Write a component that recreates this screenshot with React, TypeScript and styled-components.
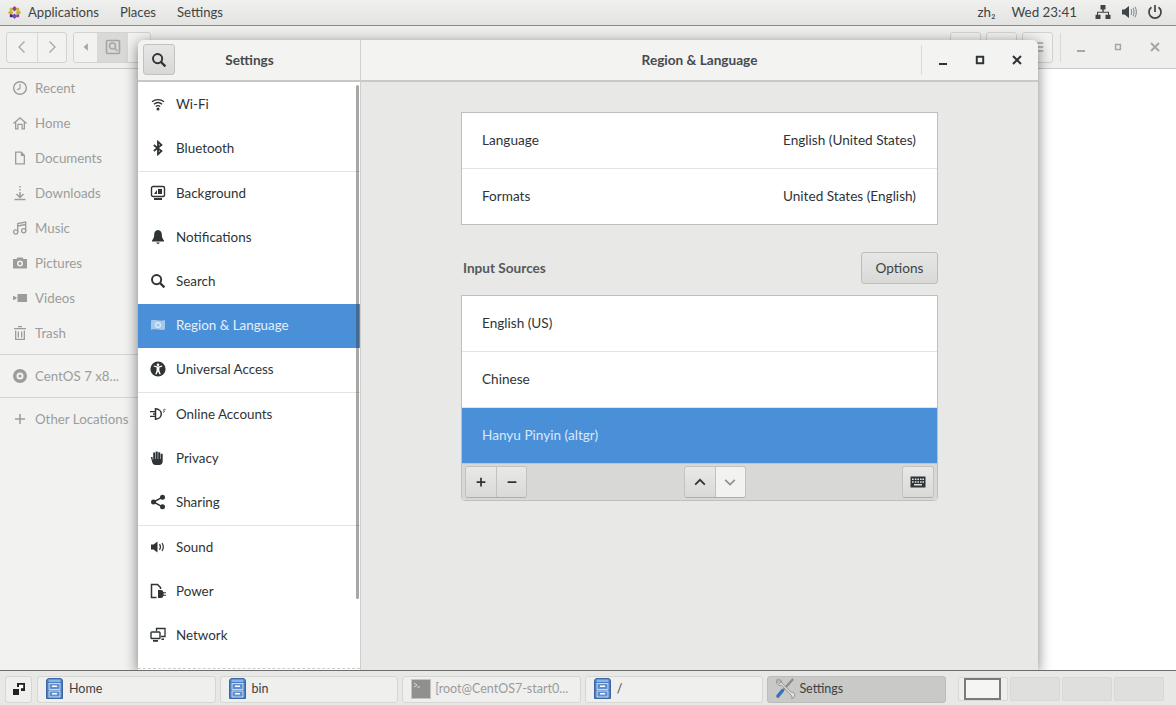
import styled, { createGlobalStyle } from "styled-components";
import { ReactNode } from "react";

const GlobalStyle = createGlobalStyle`
	html, body {
		margin: 0;
		padding: 0;
		width: 1176px;
		height: 705px;
		overflow: hidden;
		background: #e8e8e7;
		font-family: Lato, "Open Sans", sans-serif;
		font-size: 13.6px;
	}
	* { box-sizing: border-box; }
`;

const icons: Record<string, ReactNode> = {
	wifi: (
		<>
			<path d="M2 5.800C5.500 2.900 10.500 2.900 14 5.800M3.900 8.200c2.400-2 5.800-2 8.200 0M5.800 10.500c1.300-1 3.100-1 4.400 0" fill="none" stroke="currentColor" strokeWidth="1.300" />
			<circle cx="8" cy="13" r="1.500" fill="currentColor" />
		</>
	),
	bluetooth: <path d="M3.800 5l7.600 6-3.400 3.200V1.800L11.400 5 3.800 11" fill="none" stroke="currentColor" strokeWidth="1.800" />,
	background: (
		<>
			<rect x="1.500" y="1.500" width="13" height="10" rx="1.500" fill="none" stroke="currentColor" strokeWidth="1.400" />
			<path d="M4 9l3-4v4zM8 4h4v5H8z" fill="currentColor" />
			<path d="M4 13h8v2H4z" fill="currentColor" />
		</>
	),
	bell: <path d="M8 1c2.600 0 3.800 2.200 3.800 4.600 0 3 .9 4.400 2.200 5.900v1H2v-1c1.300-1.500 2.200-2.900 2.200-5.900C4.200 3.200 5.400 1 8 1zM6.400 13.600h3.200C9.500 14.600 8.900 15 8 15s-1.500-.4-1.600-1.400z" fill="currentColor" />,
	search: (
		<>
			<circle cx="6.600" cy="6.600" r="4.600" fill="none" stroke="currentColor" strokeWidth="1.900" />
			<path d="M10 10l4.400 4.400" stroke="currentColor" strokeWidth="2.300" />
		</>
	),
	region: (
		<>
			<path d="M1 3.500c4-1.400 10 1.200 14-.4v9.400c-4 1.400-10-1.200-14 .4z" fill="currentColor" opacity="0.6" />
			<circle cx="8" cy="8" r="2.400" fill="none" stroke="currentColor" strokeWidth="1.100" />
		</>
	),
	universal: (
		<>
			<circle cx="8" cy="8" r="7.600" fill="currentColor" />
			<circle cx="8" cy="3.800" r="1.300" fill="#fff" />
			<path d="M3.600 5.600l3 1v3L5.200 13.200l1.200.4L8 10.400l1.600 3.200 1.200-.4L9.400 9.600v-3l3-1-.3-1.100L8 5.600 3.900 4.500z" fill="#fff" />
		</>
	),
	online: (
		<>
			<path d="M5.500 2.800c3.600.2 5.800 2.500 5.800 5.200s-2.200 5-5.800 5.200z" fill="none" stroke="currentColor" strokeWidth="1.500" />
			<path d="M0 5.600h5.500M0 10.400h5.500M3 8h3" stroke="currentColor" strokeWidth="1.400" />
			<path d="M15.500 3.600c-1.600-.8-2.400.2-1.600 1 .8.700.6 1.900-1 1.400" fill="none" stroke="currentColor" strokeWidth="0.900" />
		</>
	),
	privacy: <path d="M.8 7h1.800v2.500h.6V2.500h2v6.500h.5V1.500h2V9h.5V2.200h2V9h.5V3.800h2V11c0 2.600-1.400 4-3.600 4H5.600c-1.700 0-2.600-.8-3.200-2.200z" fill="currentColor" />,
	share: (
		<>
			<path d="M12.500 3.200L3.500 8l9 4.800" fill="none" stroke="currentColor" strokeWidth="1.500" />
			<circle cx="12.500" cy="3.200" r="2.500" fill="currentColor" />
			<circle cx="3.500" cy="8" r="2.500" fill="currentColor" />
			<circle cx="12.500" cy="12.800" r="2.500" fill="currentColor" />
		</>
	),
	sound: (
		<>
			<path d="M1 5.500h2.500L7.500 2.500v11l-4-3H1z" fill="currentColor" />
			<path d="M9.500 5.200c1.100 1.600 1.100 4 0 5.600M12 4c1.600 2.400 1.600 5.600 0 8" fill="none" stroke="currentColor" strokeWidth="1.200" />
		</>
	),
	power: (
		<>
			<path d="M6.500 14.500H1.500V1.500h6l3 3v1.500" fill="none" stroke="currentColor" strokeWidth="1.500" />
			<path d="M8 7h2.800a2.800 2.800 0 012.700 2.200H16v1h-2.400v1.600H16v1h-2.500a2.800 2.800 0 01-2.700 2.200H8z" fill="currentColor" />
		</>
	),
	network: (
		<>
			<path d="M6.500 4V1.500h8.500v8H11" fill="none" stroke="currentColor" strokeWidth="1.300" />
			<rect x="1" y="5" width="9" height="6.500" rx="0.800" fill="none" stroke="currentColor" strokeWidth="1.400" />
			<path d="M3 13h5v1.800H3zM11.500 11.500H14v1.500h-2.500z" fill="currentColor" />
		</>
	),
	clock: (
		<>
			<circle cx="8" cy="8" r="6.300" fill="none" stroke="currentColor" strokeWidth="1.400" />
			<path d="M8 4v4.300L5 10" fill="none" stroke="currentColor" strokeWidth="1.200" />
		</>
	),
	home: <path d="M1 8l7-6 7 6-.8 1L13 8v6.500h-3.500V10h-3v4.500H3V8L1.800 9zM4.300 7v6.200h1V8.800h5.400v4.400h1V7L8 3.800z" fill="currentColor" />,
	document: <path d="M3 1.500h6.500l3.500 3.500v9.500H3zM8.800 2.800H4.300v10.400h7.400V6H8.800z" fill="currentColor" fillRule="evenodd" />,
	download: <path d="M8 1v1.500M8 4v1.500M8 7v5M4.500 9L8 12.500 11.500 9M2.500 14.500h11" fill="none" stroke="currentColor" strokeWidth="1.500" />,
	music: (
		<>
			<path d="M5.700 12V3.500l8-1.500v8.500M5.700 6l8-1.500" fill="none" stroke="currentColor" strokeWidth="1.300" />
			<circle cx="3.700" cy="12" r="2.100" fill="none" stroke="currentColor" strokeWidth="1.300" />
			<circle cx="11.700" cy="10.700" r="2.100" fill="none" stroke="currentColor" strokeWidth="1.300" />
		</>
	),
	camera: (
		<path
			d="M1 4h3.500l1-1.500h5l1 1.500H15v9.500H1zM8 5.500a3 3 0 100 6 3 3 0 000-6zM8 7a1.500 1.500 0 110 3 1.500 1.500 0 010-3z"
			fill="currentColor"
			fillRule="evenodd"
		/>
	),
	video: <path d="M5.500 4h9.500v8H5.500zM1 5.800l3.500 1.400v1.600L1 10.200z" fill="currentColor" />,
	trash: <path d="M2 3h12v1.300H2zM6 1h4v1.300H6zM3 5.500h1.300v8.200h7.400V5.500H13v9.500H3zM5.700 6.500H7v6H5.700zM9 6.500h1.300v6H9z" fill="currentColor" />,
	disc: <path d="M8 1a7 7 0 110 14A7 7 0 018 1zm0 3.500a3.500 3.500 0 100 7 3.500 3.500 0 000-7zM8 6.500a1.500 1.500 0 110 3 1.500 1.500 0 010-3z" fill="currentColor" fillRule="evenodd" />,
	plus: <path d="M8 3v10M3 8h10" stroke="currentColor" strokeWidth="1.500" />,
	boldPlus: <path d="M8 3v10M3 8h10" stroke="currentColor" strokeWidth="2" />,
	minus: <path d="M3 8h10" stroke="currentColor" strokeWidth="2" />,
	up: <path d="M2.500 11L8 5.500l5.500 5.500" fill="none" stroke="currentColor" strokeWidth="2" />,
	down: <path d="M2.500 5.500L8 11l5.500-5.500" fill="none" stroke="currentColor" strokeWidth="2" />,
	left: <path d="M10.500 2.500L5 8l5.500 5.500" fill="none" stroke="currentColor" strokeWidth="1.300" />,
	right: <path d="M5.500 2.500L11 8l-5.500 5.500" fill="none" stroke="currentColor" strokeWidth="1.300" />,
	pathBack: <path d="M11 2v12L4 8z" fill="currentColor" />,
	menu: <path d="M2 3.500h12M2 8h12M2 12.500h12" stroke="currentColor" strokeWidth="1.600" />,
	keyboard: (
		<path
			d="M.5 2.500h15v11H.5zM2 4.500V6h1.600V4.500zM4.800 4.500V6h1.600V4.500zM7.400 4.500V6H9V4.500zM10 4.500V6h1.600V4.500zM12.400 4.500V6H14V4.500zM2 7.200v1.600h1.600V7.200zM4.800 7.200v1.600h1.600V7.200zM7.400 7.200v1.600H9V7.200zM10 7.200v1.600h1.600V7.200zM12.400 7.200v1.600H14V7.200zM4 10v1.500h8V10z"
			fill="currentColor"
			fillRule="evenodd"
		/>
	),
	tree: <path d="M5.500 1h5v4.500H8.700v2.200H14v3h1.500V15h-5v-4.300H13V8.700H3v2H5.500V15h-5v-4.300H2v-3h5.300V5.500H5.500z" fill="currentColor" />,
	volume: (
		<>
			<path d="M1 5.500h2.500L8 2v12l-4.500-3.500H1z" fill="currentColor" />
			<path d="M10 5c.8 1.800.8 4.200 0 6M12 3.800c1.300 2.600 1.300 5.800 0 8.400M14 2.700c1.800 3.300 1.800 7.300 0 10.600" fill="none" stroke="currentColor" strokeWidth="0.900" opacity="0.7" />
		</>
	),
	shutdown: <path d="M4.500 3.300a6 6 0 107 0M8 1v7" fill="none" stroke="currentColor" strokeWidth="1.700" />,
	close: <path d="M4 4l8 8M12 4l-8 8" stroke="currentColor" strokeWidth="2" />,
	maximize: <path d="M4.800 4.800h6.400v6.400H4.800z" fill="none" stroke="currentColor" strokeWidth="2" />,
	minimize: <path d="M4 12h8" stroke="currentColor" strokeWidth="2" />,
	windows: (
		<>
			<path d="M6 2h8v8H10V6H6z" fill="currentColor" />
			<path d="M8 3.800h4.200v3.400H8z" fill="#fff" />
			<path d="M2 8h6v6H2z" fill="currentColor" />
		</>
	),
	recentFolder: (
		<>
			<rect x="1.500" y="1.500" width="13" height="13" rx="1" fill="none" stroke="currentColor" strokeWidth="1.600" />
			<circle cx="7.500" cy="7" r="3" fill="none" stroke="currentColor" strokeWidth="1.500" />
			<path d="M9.500 9l3 3" stroke="currentColor" strokeWidth="1.500" />
		</>
	),
};

const Glyph = ({ name, size = 16 }: { name: string; size?: number }) => (
	<svg width={size} height={size} viewBox="0 0 16 16" style={{ flex: "none", display: "block" }}>
		{icons[name]}
	</svg>
);

const Logo = () => (
	<svg width="15" height="15" viewBox="0 0 16 16">
		<path d="M1 8l3-3 3 3-3 3z" fill="#e4a33a" />
		<path d="M8 1l3 3-3 3-3-3z" fill="#9c3d8f" />
		<path d="M15 8l-3 3-3-3 3-3z" fill="#a4c639" />
		<path d="M8 15l-3-3 3-3 3 3z" fill="#7a4fa3" />
		<path d="M3 3h3v3H3z" fill="#9ccb3f" />
		<path d="M10 3h3v3h-3z" fill="#e8a33d" />
		<path d="M3 10h3v3H3z" fill="#2c2c7a" />
		<path d="M10 10h3v3h-3z" fill="#a13e97" />
	</svg>
);

const Cabinet = () => (
	<svg width="17" height="21" viewBox="0 0 17 21" style={{ flex: "none" }}>
		<path d="M.5 3a2.500 2.500 0 012.500-2.500h11A2.500 2.500 0 0116.500 3v17.500H.5z" fill="#4a7cc2" stroke="#3a67a8" />
		<path d="M2.500 1.500h12V4h-12z" fill="#8fb2e0" />
		<rect x="3" y="5.500" width="11" height="6" fill="#5f8fce" stroke="#e6edf6" strokeWidth="0.800" />
		<rect x="3" y="13" width="11" height="6" fill="#5f8fce" stroke="#e6edf6" strokeWidth="0.800" />
		<path d="M6 7.500h5V9H6zM6 15h5v1.500H6z" fill="#fff" />
	</svg>
);

const TerminalIcon = () => (
	<svg width="20" height="20" viewBox="0 0 20 20" style={{ flex: "none", marginRight: -2 }}>
		<rect x="0.500" y="0.500" width="19" height="19" fill="#8f928c" stroke="#c4c4c2" />
		<path d="M3 4l3 2-3 2" fill="none" stroke="#d8d8d8" />
		<path d="M6 8h3" stroke="#d8d8d8" />
	</svg>
);

const ToolsIcon = () => (
	<svg width="21" height="23" viewBox="0 0 22 24" style={{ flex: "none", marginRight: -3, marginLeft: -1 }}>
		<path d="M19 2L9 13" stroke="#8b8d89" strokeWidth="2.500" />
		<path d="M8 14l-5 6" stroke="#3d72b8" strokeWidth="3.500" strokeLinecap="round" />
		<path d="M3 2c-2 2-2 4 0 6 1.500 1 3 1 4 .5L17 19c1 1.500 1 2.500.5 3.500 2-.5 3.500-2 3-4.500-.5-2-2.500-2.500-3.500-2L7 6c0-2-1-3-2-3.500L6 6 4.500 7 3 5.500z" fill="#e4e5e2" stroke="#7f817d" strokeWidth="0.800" />
	</svg>
);

const Screen = styled.div`
	width: 1176px;
	height: 705px;
	display: flex;
	flex-direction: column;
	overflow: hidden;
	color: #2e3436;
`;

const TopBar = styled.header`
	height: 26px;
	flex: none;
	display: flex;
	align-items: center;
	justify-content: space-between;
	padding: 0 13px 1px 7px;
	background: linear-gradient(#f0f0ef, #e3e3e2);
	border-bottom: 1px solid #8a8a88;
	color: #3f4446;
	font-size: 13.4px;
	position: relative;
	z-index: 3;
`;

const MenuGroup = styled.div`
	display: flex;
	align-items: center;
	gap: 21px;
	font-size: 13.1px;
`;

const StatusGroup = styled.div`
	display: flex;
	align-items: center;
	gap: 10px;
`;

const AppMenu = styled.div`
	display: flex;
	align-items: center;
	gap: 6px;
`;

const Clock = styled.span`
	margin: 0 8px 0 6px;
`;

const Desktop = styled.main`
	position: relative;
	flex: 1;
	min-height: 0;
	background: #fff;
`;

const FilesWindow = styled.section`
	height: 100%;
	display: flex;
	flex-direction: column;
`;

const FilesToolbar = styled.div`
	height: 43px;
	flex: none;
	display: flex;
	align-items: center;
	padding: 0 0 0 6px;
	background: #efefee;
	border-bottom: 1px solid #c9c9c7;
	color: #a6a6a4;
`;

const Linked = styled.div<{ $gapLeft?: number }>`
	display: flex;
	margin-left: ${(p) => p.$gapLeft ?? 0}px;
	border: 1px solid #d2d2d0;
	border-radius: 3px;
	background: #f2f2f1;
`;

const DimButton = styled.div<{ $w: number; $active?: boolean }>`
	width: ${(p) => p.$w}px;
	height: 29px;
	display: flex;
	align-items: center;
	justify-content: center;
	color: #a5a5a3;
	background: ${(p) => (p.$active ? "#d9d9d7" : "transparent")};
	& + & {
		border-left: 1px solid #d8d8d6;
	}
`;

const ToolbarRight = styled.div`
	margin-left: auto;
	display: flex;
	align-items: center;
	padding-right: 3px;
`;

const ToolDivider = styled.div`
	width: 1px;
	height: 29px;
	margin: 0 1px 0 7px;
	background: #d8d8d6;
`;

const DimWinButton = styled.div`
	width: 37px;
	display: flex;
	justify-content: center;
	color: #a6a6a4;
`;

const FilesBody = styled.div`
	flex: 1;
	min-height: 0;
	display: flex;
`;

const FilesSidebar = styled.nav`
	width: 200px;
	padding-top: 2px;
	background: #f2f2f1;
	color: #9b9d9c;
	font-size: 13.3px;
`;

const PlaceRow = styled.div`
	height: 35px;
	display: flex;
	align-items: center;
	gap: 7px;
	padding: 0 0 2px 12px;
	white-space: nowrap;
`;

const PlaceDivider = styled.div`
	height: 1px;
	margin: 3px 0 4px;
	background: #d5d5d3;
`;

const SettingsWindow = styled.section`
	position: absolute;
	left: 138px;
	top: 14px;
	width: 900px;
	height: 630px;
	display: grid;
	grid-template-columns: 223px 1fr;
	grid-template-rows: 42px 1fr;
	border-radius: 6px 6px 0 0;
	background: #e8e8e7;
	box-shadow: 0 3px 14px rgba(0, 0, 0, 0.5);
	overflow: hidden;
`;

const HeaderCell = styled.div<{ $side?: boolean }>`
	display: flex;
	align-items: center;
	position: relative;
	background: #f3f3f2;
	border-bottom: 2px solid #c8c8c6;
	border-right: ${(p) => (p.$side ? "1px solid #cfcfcd" : "none")};
	padding: 0 3px 0 5px;
`;

const SearchButton = styled.div`
	width: 32px;
	height: 31px;
	display: flex;
	align-items: center;
	justify-content: center;
	margin-bottom: 1px;
	border: 1px solid #c2c2c0;
	border-radius: 3px;
	background: linear-gradient(#e6e6e5, #d8d8d6);
	color: #2e3436;
`;

const HeaderTitle = styled.div`
	flex: 1;
	text-align: center;
	font-weight: 700;
	color: #464b4d;
	margin-right: 33px;
	margin-bottom: 1px;
`;

const MainTitle = styled(HeaderTitle)`
	margin: 0 0 1px;
	position: absolute;
	left: 0;
	right: 0;
`;

const WindowControls = styled.div`
	margin-left: auto;
	height: 30px;
	display: flex;
	align-items: center;
	padding-left: 2px;
	border-left: 1px solid #dcdcda;
	margin-bottom: 1px;
	color: #2e3436;
`;

const WindowButton = styled.div`
	width: 37px;
	display: flex;
	justify-content: center;
`;

const SideList = styled.div`
	position: relative;
	padding-top: 1px;
	background: #fff;
	border-right: 1px solid #cfcfcd;
	font-size: 13.4px;
	overflow: hidden;
`;

const SideRow = styled.div<{ $selected?: boolean }>`
	height: 44px;
	display: flex;
	align-items: center;
	gap: 10px;
	padding: 0 0 2px 12px;
	background: ${(p) => (p.$selected ? "#4a90d9" : "transparent")};
	color: ${(p) => (p.$selected ? "#e6effa" : "#2e3436")};
`;

const SideSeparator = styled.div`
	height: 1px;
	background: #e3e3e2;
`;

const UnderShoot = styled.div`
	position: absolute;
	left: 0;
	right: 0;
	bottom: 1px;
	border-top: 1px dashed #cbcbc9;
`;

const ScrollThumb = styled.div`
	position: absolute;
	top: 3px;
	right: 1px;
	width: 3px;
	height: 514px;
	border-radius: 2px;
	background: rgba(60, 60, 60, 0.45);
`;

const MainPanel = styled.div`
	padding: 30px 100px 0;
	display: flex;
	flex-direction: column;
`;

const Frame = styled.div`
	border: 1px solid #bfbfbd;
	background: #fff;
`;

const FrameRow = styled.div<{ $selected?: boolean }>`
	height: 55px;
	display: flex;
	align-items: center;
	justify-content: space-between;
	padding: 0 21px 2px 20px;
	background: ${(p) => (p.$selected ? "#4a90d9" : "transparent")};
	color: ${(p) => (p.$selected ? "#dbe8f7" : "#2e3436")};
	& + & {
		height: 56px;
		border-top: 1px solid #e3e3e2;
	}
`;

const SectionHead = styled.div`
	height: 32px;
	margin: 27px 0 11px;
	display: flex;
	align-items: center;
	justify-content: space-between;
	padding-left: 2px;
`;

const SectionTitle = styled.div`
	font-weight: 700;
	color: #55595b;
`;

const OptionsButton = styled.div`
	width: 77px;
	height: 32px;
	display: flex;
	align-items: center;
	justify-content: center;
	border: 1px solid #bdbdbb;
	border-radius: 3px;
	background: linear-gradient(#e6e6e5, #d9d9d7);
	color: #3c4244;
`;

const SourceFrame = styled(Frame)`
	border-radius: 0 0 4px 4px;
	overflow: hidden;
`;

const SourceToolbar = styled.div`
	height: 37px;
	display: flex;
	align-items: center;
	justify-content: space-between;
	padding: 0 3px;
	background: #d8d8d6;
	border-top: 1px solid #c2c2c0;
`;

const SmallGroup = styled.div`
	display: flex;
	border: 1px solid #c2c2c0;
	border-bottom-color: #adadab;
	border-radius: 3px;
	overflow: hidden;
`;

const SmallButton = styled.div<{ $off?: boolean }>`
	width: 30px;
	height: 30px;
	display: flex;
	align-items: center;
	justify-content: center;
	background: ${(p) => (p.$off ? "#f2f2f1" : "linear-gradient(#e8e8e7, #d9d9d7)")};
	color: ${(p) => (p.$off ? "#8f9192" : "#2e3436")};
	& + & {
		border-left: 1px solid #c2c2c0;
	}
`;

const BottomPanel = styled.footer`
	height: 35px;
	flex: none;
	display: flex;
	align-items: center;
	padding: 2px 12px 0 5px;
	background: #e8e8e7;
	border-top: 1px solid #6d6d6b;
	position: relative;
	z-index: 3;
`;

const DesktopToggle = styled.div`
	width: 27px;
	height: 27px;
	margin-right: 5px;
	display: flex;
	align-items: center;
	justify-content: center;
	background: #efefee;
	border: 1px solid #d6d6d4;
	border-radius: 3px;
	color: #1f2324;
`;

const Task = styled.div<{ $active?: boolean; $dim?: boolean }>`
	width: 178.6px;
	height: 27px;
	margin-right: 4px;
	display: flex;
	align-items: center;
	gap: 6px;
	padding: 0 0 1px 8px;
	border: 1px solid ${(p) => (p.$active ? "#bcbcba" : "#d6d6d4")};
	border-radius: 3px;
	background: ${(p) => (p.$active ? "#c9c9c7" : "#efefee")};
	color: ${(p) => (p.$dim ? "#9a9c9b" : "#3c4244")};
	font-size: 12.5px;
	white-space: nowrap;
	overflow: hidden;
`;

const Workspaces = styled.div`
	margin-left: 8px;
	display: flex;
	gap: 2px;
`;

const Workspace = styled.div<{ $current?: boolean }>`
	width: 50px;
	height: 24px;
	display: flex;
	align-items: center;
	justify-content: center;
	background: ${(p) => (p.$current ? "#eeeeed" : "#dfdfde")};
	border: 1px solid #d8d8d6;
	border-radius: 2px;
`;

const WorkspaceWindow = styled.div`
	width: 37px;
	height: 22px;
	background: #f5f5f4;
	border: 2px solid #7b7b79;
`;

const places = [
	{ icon: "clock", label: "Recent" },
	{ icon: "home", label: "Home" },
	{ icon: "document", label: "Documents" },
	{ icon: "download", label: "Downloads" },
	{ icon: "music", label: "Music" },
	{ icon: "camera", label: "Pictures" },
	{ icon: "video", label: "Videos" },
	{ icon: "trash", label: "Trash" },
];

const panels: { icon: string; label: string; selected?: boolean }[][] = [
	[
		{ icon: "wifi", label: "Wi-Fi" },
		{ icon: "bluetooth", label: "Bluetooth" },
	],
	[
		{ icon: "background", label: "Background" },
		{ icon: "bell", label: "Notifications" },
		{ icon: "search", label: "Search" },
		{ icon: "region", label: "Region & Language", selected: true },
		{ icon: "universal", label: "Universal Access" },
	],
	[
		{ icon: "online", label: "Online Accounts" },
		{ icon: "privacy", label: "Privacy" },
		{ icon: "share", label: "Sharing" },
	],
	[
		{ icon: "sound", label: "Sound" },
		{ icon: "power", label: "Power" },
		{ icon: "network", label: "Network" },
	],
];

export default function App() {
	return (
		<>
			<GlobalStyle />
			<Screen>
				<TopBar>
					<MenuGroup>
						<AppMenu>
							<Logo />
							<span>Applications</span>
						</AppMenu>
						<span>Places</span>
						<span>Settings</span>
					</MenuGroup>
					<StatusGroup>
						<span>zh₂</span>
						<Clock>Wed 23:41</Clock>
						<Glyph name="tree" />
						<Glyph name="volume" />
						<Glyph name="shutdown" />
					</StatusGroup>
				</TopBar>

				<Desktop>
					<FilesWindow>
						<FilesToolbar>
							<Linked>
								<DimButton $w={30}><Glyph name="left" /></DimButton>
								<DimButton $w={29}><Glyph name="right" /></DimButton>
							</Linked>
							<Linked $gapLeft={6}>
								<DimButton $w={23}><Glyph name="pathBack" size={10} /></DimButton>
								<DimButton $w={30} $active><Glyph name="recentFolder" /></DimButton>
								<DimButton $w={23} />
							</Linked>
							<ToolbarRight>
								<Linked><DimButton $w={29} /></Linked>
								<Linked $gapLeft={5}><DimButton $w={29} /></Linked>
								<Linked $gapLeft={5}><DimButton $w={29}><Glyph name="menu" size={14} /></DimButton></Linked>
								<ToolDivider />
								<DimWinButton><Glyph name="minimize" /></DimWinButton>
								<DimWinButton><Glyph name="maximize" size={12} /></DimWinButton>
								<DimWinButton><Glyph name="close" /></DimWinButton>
							</ToolbarRight>
						</FilesToolbar>
						<FilesBody>
							<FilesSidebar>
								{places.map((p) => (
									<PlaceRow key={p.label}>
										<Glyph name={p.icon} />
										<span>{p.label}</span>
									</PlaceRow>
								))}
								<PlaceDivider />
								<PlaceRow>
									<Glyph name="disc" />
									<span>CentOS 7 x8...</span>
								</PlaceRow>
								<PlaceDivider />
								<PlaceRow>
									<Glyph name="plus" />
									<span>Other Locations</span>
								</PlaceRow>
							</FilesSidebar>
						</FilesBody>
					</FilesWindow>

					<SettingsWindow>
						<HeaderCell $side>
							<SearchButton><Glyph name="search" /></SearchButton>
							<HeaderTitle>Settings</HeaderTitle>
						</HeaderCell>
						<HeaderCell>
							<MainTitle>Region &amp; Language</MainTitle>
							<WindowControls>
								<WindowButton><Glyph name="minimize" /></WindowButton>
								<WindowButton><Glyph name="maximize" /></WindowButton>
								<WindowButton><Glyph name="close" /></WindowButton>
							</WindowControls>
						</HeaderCell>

						<SideList>
							{panels.map((group, i) => (
								<div key={i}>
									{i > 0 && <SideSeparator />}
									{group.map((row) => (
										<SideRow key={row.label} $selected={row.selected}>
											<Glyph name={row.icon} />
											<span>{row.label}</span>
										</SideRow>
									))}
								</div>
							))}
							<UnderShoot />
							<ScrollThumb />
						</SideList>

						<MainPanel>
							<Frame>
								<FrameRow>
									<span>Language</span>
									<span>English (United States)</span>
								</FrameRow>
								<FrameRow>
									<span>Formats</span>
									<span>United States (English)</span>
								</FrameRow>
							</Frame>
							<SectionHead>
								<SectionTitle>Input Sources</SectionTitle>
								<OptionsButton>Options</OptionsButton>
							</SectionHead>
							<SourceFrame>
								<FrameRow>English (US)</FrameRow>
								<FrameRow>Chinese</FrameRow>
								<FrameRow $selected>Hanyu Pinyin (altgr)</FrameRow>
								<SourceToolbar>
									<SmallGroup>
										<SmallButton><Glyph name="boldPlus" size={14} /></SmallButton>
										<SmallButton><Glyph name="minus" size={14} /></SmallButton>
									</SmallGroup>
									<SmallGroup>
										<SmallButton><Glyph name="up" size={14} /></SmallButton>
										<SmallButton $off><Glyph name="down" size={14} /></SmallButton>
									</SmallGroup>
									<SmallGroup>
										<SmallButton><Glyph name="keyboard" /></SmallButton>
									</SmallGroup>
								</SourceToolbar>
							</SourceFrame>
						</MainPanel>
					</SettingsWindow>
				</Desktop>

				<BottomPanel>
					<DesktopToggle><Glyph name="windows" /></DesktopToggle>
					<Task><Cabinet />Home</Task>
					<Task><Cabinet />bin</Task>
					<Task $dim><TerminalIcon />[root@CentOS7-start0...</Task>
					<Task><Cabinet />/</Task>
					<Task $active><ToolsIcon />Settings</Task>
					<Workspaces>
						<Workspace $current><WorkspaceWindow /></Workspace>
						<Workspace />
						<Workspace />
						<Workspace />
					</Workspaces>
				</BottomPanel>
			</Screen>
		</>
	);
}
